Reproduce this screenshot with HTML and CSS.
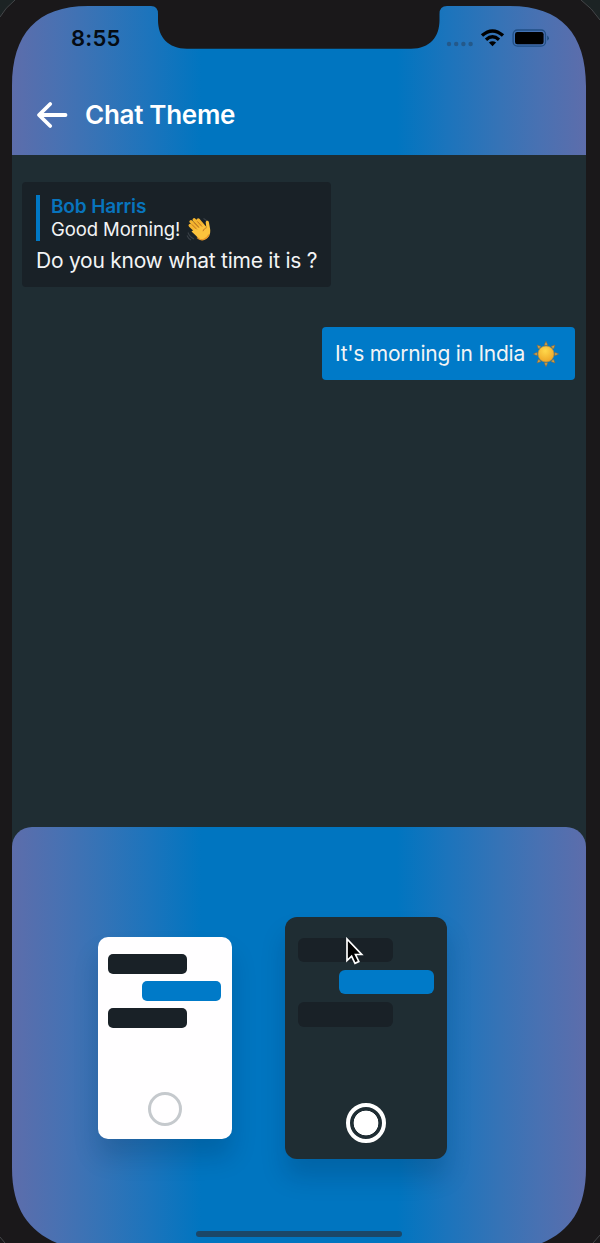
FILE: index.html
```html
<!DOCTYPE html>
<html lang="en">
<head>
<meta charset="utf-8">
<title>Chat Theme</title>
<link rel="stylesheet" href="styles.css">
</head>
<body>
<div class="phone">
  <main class="screen">
    <header class="header">
      <div class="status">
        <span class="clock">8:55</span>
        <svg class="signals" width="104" height="20" viewBox="0 0 104 20">
          <g fill="#24598a"><circle cx="3" cy="16" r="2.2"/><circle cx="10.2" cy="16" r="2.2"/><circle cx="17.4" cy="16" r="2.2"/><circle cx="24.6" cy="16" r="2.2"/></g>
          <g fill="none" stroke="#000" stroke-width="3.4"><path d="M36 7.6Q46.5-1.7 57 7.6"/><path d="M40 11.7Q46.5 6 53 11.7"/></g>
          <path d="M42.9 14.5Q46.5 11.8 50.1 14.5L46.5 18.2Z"/>
          <rect x="67.1" y="2" width="32.4" height="16.2" rx="4.4" fill="none" stroke="#214f85" stroke-width="1.3"/>
          <rect x="69" y="4" width="28.6" height="12.3" rx="2.3"/>
          <path d="M101.3 7.5Q104.4 10.2 101.3 12.8Z" fill="#174879"/>
        </svg>
      </div>
      <div class="title-row">
        <svg class="back" width="32" height="28" viewBox="0 0 32 28" fill="none" stroke="#fff" stroke-width="3.8" stroke-linecap="round" stroke-linejoin="round"><path d="M14.2 3 3 14l11.2 11M3.5 14h26"/></svg>
        <h1 class="title">Chat Theme</h1>
      </div>
    </header>
    <section class="chat">
      <article class="bubble received">
        <div class="quote">
          <div class="author">Bob Harris</div>
          <div class="quoted"><span>Good Morning!</span>
            <svg width="26" height="26" viewBox="0 0 26 26">
              <path d="M2 16.5Q3.5 21 8 23M1 19.5Q2.5 23 5 24M17.5 2.5Q21 4 21.5 7" fill="none" stroke="#394047" stroke-width="1.1"/>
              <g stroke="#f5b52f" stroke-width="3.3" stroke-linecap="round"><path d="m4.2 9.5 7.5 7M5 5.7l9 9M8.2 3.8l8.8 9M12.2 3.9l7 8.2"/></g>
              <path d="M8 13.8 17 8.2l3.4 3.3-.7-4.8c-.2-2.2 2.6-2.6 3.2-.5l1.2 6.5c.8 5.1-1.2 9.3-5.2 10.7-4 1.2-6.4-.6-8.6-3.4L5.5 15.4Z" fill="#fbc23c"/>
              <path d="m5.8 8.4 5 5M8 6.5l5.2 5.4M11.3 5.4l4.8 5.2M17 15.2c.7-2 2-3 3.6-3.5" fill="none" stroke="#bd6e20" stroke-width=".9"/>
              <path d="M11 21.6c4 3.8 9 2.5 12-3" fill="none" stroke="#e69528" stroke-width="1.2"/>
            </svg>
          </div>
        </div>
        <p class="message">Do you know what time it is ?</p>
      </article>
      <article class="bubble sent">
        <p class="message">It's morning in India</p>
        <svg width="26" height="26" viewBox="0 0 26 26">
          <defs><radialGradient id="sun" cx=".45" cy=".3" r=".75"><stop stop-color="#ffd84b"/><stop offset="1" stop-color="#eda224"/></radialGradient></defs>
          <g fill="#d9a341" stroke="#806a48" stroke-width=".6"><path id="ray" d="m11.2 4.2 1.8-3.9 1.8 3.9Z"/><use href="#ray" transform="rotate(45 13 13)"/><use href="#ray" transform="rotate(90 13 13)"/><use href="#ray" transform="rotate(135 13 13)"/><use href="#ray" transform="rotate(180 13 13)"/><use href="#ray" transform="rotate(225 13 13)"/><use href="#ray" transform="rotate(270 13 13)"/><use href="#ray" transform="rotate(315 13 13)"/></g>
          <circle cx="13" cy="13" r="8" fill="url(#sun)" stroke="#b98b3b" stroke-width=".6"/>
        </svg>
      </article>
    </section>
    <section class="sheet">
      <div class="card light">
        <i class="bar"></i><i class="bar mine"></i><i class="bar"></i>
        <span class="radio"></span>
      </div>
      <div class="card dark">
        <i class="bar"></i><i class="bar mine"></i><i class="bar"></i>
        <span class="radio"></span>
        <svg class="cursor" width="20" height="30" viewBox="0 0 20 30"><path d="M2 2v21.5l4.6-4.4 3.4 7.2 3.8-1.8-3.3-7h6.2Z" fill="#000" stroke="#fff" stroke-width="1.7"/></svg>
      </div>
      <div class="home"></div>
    </section>
  </main>
  <svg class="bezel" width="600" height="1243" viewBox="0 0 600 1243">
    <path fill="#1a181a" fill-rule="evenodd" d="M0 0H600V1243H0ZM12 86C12 34 37 6 88 6H151Q158 6 158 14V20C158 37 168 48.7 187 48.7H411C430 48.7 439.5 37 439.5 20V14Q439.5 6 447 6H510C561 6 586 34 586 86V1168C586 1209 570 1231 542 1243H57C29 1231 12 1209 12 1168Z"/>
    <path d="M0 0H15Q5 8 0 17ZM600 0H581Q592 8 600 20Z" fill="#1c2324"/>
    <path d="M15 0Q5 8 0 17M581 0Q592 8 600 20M0 1237l5 6M600 1235l-7 8" fill="none" stroke="#444649"/>
  </svg>
</div>
</body>
</html>
```

FILE: styles.css
```css
* { box-sizing: border-box; }
body { margin: 0; background: #1a181a; font-family: Inter, "Liberation Sans", sans-serif; }
h1, p { margin: 0; }
svg { display: block; flex: none; }
.phone { position: relative; width: 600px; height: 1243px; padding: 6px 14px 0 12px; overflow: hidden; }
.bezel { position: absolute; inset: 0; pointer-events: none; }
.screen { display: flex; flex-direction: column; height: 1237px; background: #1f2d33; }
.header, .sheet { background: linear-gradient(90deg, #5d6dab 0, #4971b2 8%, #3673b6 15%, #1c74bc 24%, #0075c0 33%, #0075c0 67%, #1c74bc 76%, #3673b6 85%, #4971b2 92%, #5d6dab 100%); }
.header { height: 148.5px; flex: none; }
.status { display: flex; justify-content: space-between; padding: 18px 36px 0 59px; height: 80px; }
.clock { font-size: 22px; line-height: 28px; font-weight: 600; letter-spacing: .2px; color: #050b12; white-space: nowrap; }
.signals { margin-top: 4px; }
.title-row { display: flex; align-items: center; gap: 17.5px; padding-left: 24px; height: 58px; }
.back { margin-left: -.5px; }
.title { font-size: 26px; line-height: 34px; font-weight: 600; letter-spacing: -.28px; color: #fff; white-space: nowrap; }
.chat { flex: 1; display: flex; flex-direction: column; padding: 27px 11px 0 10px; gap: 40px; }
.bubble { border-radius: 4px; color: #f3f4f5; }
.received { align-self: flex-start; width: 309px; height: 105px; padding: 13px 14px 0; background: #192127; }
.quote { border-left: 4px solid #0078c5; padding-left: 11px; height: 46px; }
.author { font-size: 19px; line-height: 24px; font-weight: 600; letter-spacing: -.15px; color: #0874bd; white-space: nowrap; }
.quoted { display: flex; align-items: center; gap: 6px; height: 21px; font-size: 18.5px; letter-spacing: -.1px; white-space: nowrap; }
.message { font-size: 21px; line-height: 28px; letter-spacing: -.25px; white-space: nowrap; }
.received .message { margin-top: 6px; }
.sent { align-self: flex-end; display: flex; align-items: center; gap: 8px; width: 253.5px; height: 53px; padding: 1px 13.5px 0; background: #007ac8; }
.sheet { position: relative; display: flex; align-items: flex-start; gap: 53.5px; height: 416px; flex: none; padding: 90px 0 0 85.5px; border-radius: 20px 20px 0 0; }
.card { position: relative; display: flex; flex-direction: column; box-shadow: 0 18px 24px rgba(0,20,40,.17); }
.light { width: 134px; height: 201.5px; margin-top: 20px; padding: 17px 10.5px 13px; gap: 7px; border-radius: 10px; background: #fffeff; }
.dark { width: 161.5px; height: 242px; padding: 21px 13px 16px; gap: 8px; border-radius: 12px; background: #1f2d33; }
.bar { width: 79px; height: 20px; border-radius: 5px; background: #192127; }
.mine { align-self: flex-end; background: #007ac8; }
.dark .bar { width: 94.5px; height: 24.2px; border-radius: 6px; }
.radio { align-self: center; margin-top: auto; width: 34px; height: 34px; border: 3.5px solid #c5c9cd; border-radius: 50%; }
.dark .radio { width: 40.5px; height: 40.5px; border: 4.5px solid #fff; background: radial-gradient(circle, #fff 0 12px, transparent 12.7px); background-origin: border-box; }
.cursor { position: absolute; left: 60px; top: 20px; }
.home { position: absolute; left: 184px; top: 404px; width: 206px; height: 6px; border-radius: 3px; background: #1b4768; }
```
